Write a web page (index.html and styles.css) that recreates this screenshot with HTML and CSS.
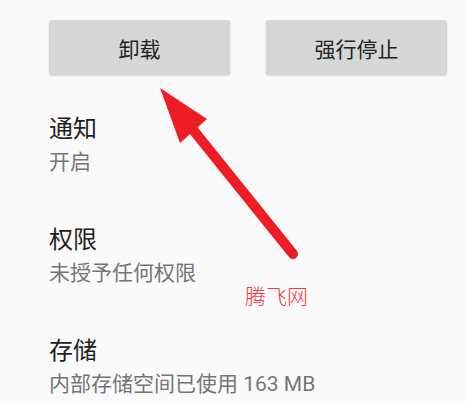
FILE: index.html
```html
<!DOCTYPE html>
<html lang="zh-CN">
<head>
  <meta charset="UTF-8">
  <title>应用信息</title>
  <link rel="stylesheet" href="styles.css">
</head>
<body>

<div class="actions">
  <button type="button" class="btn">卸载</button>
  <button type="button" class="btn">强行停止</button>
</div>

<div class="list">
  <div class="item">
    <div class="title">通知</div>
    <div class="summary">开启</div>
  </div>
  <div class="item">
    <div class="title">权限</div>
    <div class="summary">未授予任何权限</div>
  </div>
  <div class="item">
    <div class="title">存储</div>
    <div class="summary">内部存储空间已使用 163 MB</div>
  </div>
</div>

<svg class="arrow" width="465" height="403" viewBox="0 0 465 403">
  <line x1="293" y1="254" x2="190" y2="126" stroke="#ee1c25" stroke-width="10" stroke-linecap="round"/>
  <polygon points="160,88 207,119 180,143" fill="#ee1c25"/>
</svg>

<div class="mark">腾飞网</div>

</body>
</html>
```

FILE: styles.css
```css
body {
  font-family: Roboto, "Noto Sans CJK SC", sans-serif;
  background: #fafafa;
  margin: 0;
  padding: 20px 0 0 49px;
  height: 383px;
  overflow: hidden;
}

.actions {
  display: flex;
  gap: 36px;
}

.btn {
  width: 181px;
  height: 55px;
  background-color: #d6d7d7;
  color: #222;
  border: none;
  border-radius: 3px;
  box-shadow: 0 1px 2px rgba(0,0,0,0.15);
  font-family: inherit;
  font-size: 21px;
  padding: 0;
}

.list {
  margin-top: 38px;
}

.item {
  height: 111px;
}

.item:last-child {
  height: auto;
}

.title {
  font-size: 24px;
  line-height: 32px;
  color: #212121;
}

.summary {
  font-size: 21px;
  line-height: 30px;
  margin-top: 2px;
  color: #757575;
}

.arrow {
  position: absolute;
  left: 0;
  top: 0;
}

.mark {
  position: absolute;
  left: 245px;
  top: 283px;
  font-size: 21px;
  line-height: 28px;
  font-weight: 300;
  color: #f23a3a;
}
```
